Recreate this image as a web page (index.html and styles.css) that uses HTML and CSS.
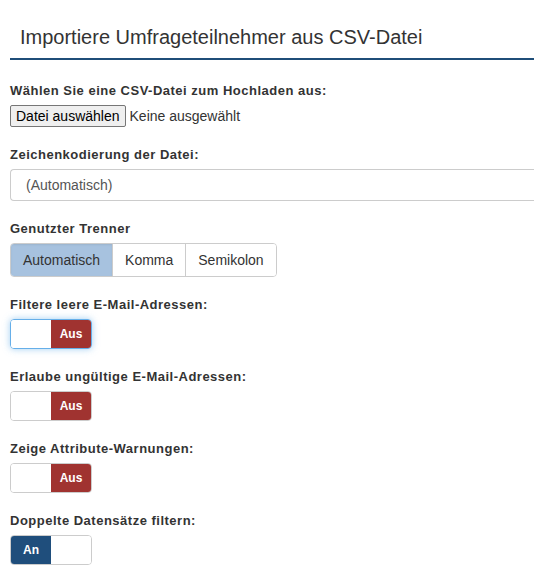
FILE: index.html
```html
<!DOCTYPE html>
<html lang="de">
<head>
<meta charset="utf-8">
<title>Importiere Umfrageteilnehmer aus CSV-Datei</title>
<link rel="stylesheet" href="styles.css">
</head>
<body>
<div class="page">
  <h3 class="title">Importiere Umfrageteilnehmer aus CSV-Datei</h3>

  <div class="group">
    <label class="lbl">Wählen Sie eine CSV-Datei zum Hochladen aus:</label>
    <div class="file">
      <button class="file-btn" type="button">Datei auswählen</button>
      <span class="file-none">Keine ausgewählt</span>
    </div>
  </div>

  <div class="group">
    <label class="lbl">Zeichenkodierung der Datei:</label>
    <div class="select">(Automatisch)</div>
  </div>

  <div class="group">
    <label class="lbl">Genutzter Trenner</label>
    <div class="btn-group">
      <span class="btn active">Automatisch</span>
      <span class="btn">Komma</span>
      <span class="btn">Semikolon</span>
    </div>
  </div>

  <div class="group">
    <label class="lbl">Filtere leere E-Mail-Adressen:</label>
    <div class="toggle focus"><span class="half"></span><span class="half off">Aus</span></div>
  </div>

  <div class="group">
    <label class="lbl">Erlaube ungültige E-Mail-Adressen:</label>
    <div class="toggle"><span class="half"></span><span class="half off">Aus</span></div>
  </div>

  <div class="group">
    <label class="lbl">Zeige Attribute-Warnungen:</label>
    <div class="toggle"><span class="half"></span><span class="half off">Aus</span></div>
  </div>

  <div class="group">
    <label class="lbl">Doppelte Datensätze filtern:</label>
    <div class="toggle"><span class="half on">An</span><span class="half"></span></div>
  </div>
</div>
</body>
</html>
```

FILE: styles.css
```css
html, body {
  margin: 0;
  padding: 0;
  background: #fff;
  overflow: hidden;
}
body {
  font-family: "Liberation Sans", Arial, sans-serif;
  color: #333;
  font-size: 14px;
}
.page {
  width: 580px;
  padding-left: 10px;
}
.title {
  margin: 0 0 22px 0;
  padding: 26px 10px 10px;
  font-size: 20px;
  line-height: 22px;
  font-weight: normal;
  color: #333;
  border-bottom: 2px solid #1f4e79;
}
.group {
  display: flex;
  flex-direction: column;
  align-items: flex-start;
  margin-bottom: 19px;
}
.lbl {
  font-size: 13px;
  font-weight: bold;
  line-height: 18px;
  letter-spacing: 0.5px;
  margin-bottom: 5px;
  color: #333;
}
.file {
  display: flex;
  align-items: center;
  gap: 4px;
  height: 22px;
}
.file-btn {
  font-family: "Liberation Sans", Arial, sans-serif;
  font-size: 14px;
  height: 22px;
  padding: 0 5px;
  background: #efefef;
  border: 1px solid #767676;
  border-radius: 2px;
  color: #000;
}
.file-none {
  font-size: 14px;
  color: #333;
}
.select {
  align-self: stretch;
  box-sizing: border-box;
  height: 32px;
  border: 1px solid #ccc;
  border-right: none;
  border-radius: 4px 0 0 4px;
  padding: 0 15px;
  line-height: 30px;
  color: #555;
  font-size: 14px;
}
.btn-group {
  display: flex;
  border: 1px solid #ccc;
  border-radius: 4px;
  overflow: hidden;
}
.btn {
  padding: 6px 12px;
  line-height: 20px;
  font-size: 14px;
  color: #333;
  background: #fff;
  border-left: 1px solid #ccc;
}
.btn:first-child {
  border-left: none;
}
.btn.active {
  background: #a7c2df;
  box-shadow: inset 0 1px 2px rgba(0,0,0,0.08);
}
.toggle {
  box-sizing: border-box;
  width: 82px;
  height: 30px;
  display: flex;
  border: 1px solid #ccc;
  border-radius: 4px;
  overflow: hidden;
}
.toggle.focus {
  border-color: #66afe9;
  box-shadow: 0 0 7px rgba(102,175,233,0.6);
}
.half {
  flex: 1;
  display: flex;
  align-items: center;
  justify-content: center;
  font-size: 12px;
  font-weight: bold;
  color: #fff;
  background: #fff;
}
.half.off {
  background: #a03330;
}
.half.on {
  background: #1f4e7c;
}
```
